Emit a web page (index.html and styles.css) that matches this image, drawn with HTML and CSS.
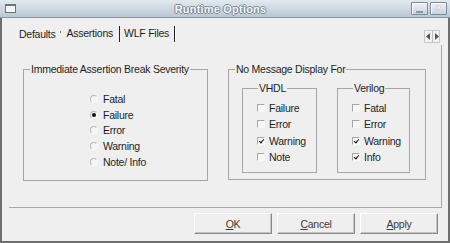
FILE: index.html
```html
<!DOCTYPE html>
<html>
<head>
<meta charset="utf-8">
<link rel="stylesheet" href="styles.css">
</head>
<body>
<div class="window">
  <div class="titlebar">
    <div class="winicon"></div>
    <div class="title">Runtime Options</div>
    <div class="tbtns">
      <div class="tbtn"><span class="minglyph"></span></div>
      <div class="tbtn"><span class="closeglyph">✕</span></div>
    </div>
  </div>
  <div class="body">
    <div class="tabs">
      <span class="tab t-defaults">Defaults</span>
      <span class="tick"></span>
      <span class="tab t-assert">Assertions</span>
      <span class="tab t-wlf">WLF Files</span>
      <div class="arrows">
        <span class="arr"><svg width="5" height="7" viewBox="0 0 5 7"><path d="M4 0 L0 3.5 L4 7 Z" fill="#555"/></svg></span>
        <span class="arr"><svg width="5" height="7" viewBox="0 0 5 7"><path d="M1 0 L5 3.5 L1 7 Z" fill="#555"/></svg></span>
      </div>
    </div>
    <div class="panel">
      <fieldset class="group g-severity">
        <legend>Immediate Assertion Break Severity</legend>
        <ul class="opts radios">
          <li><span class="radio"></span>Fatal</li>
          <li><span class="radio on"></span>Failure</li>
          <li><span class="radio"></span>Error</li>
          <li><span class="radio"></span>Warning</li>
          <li><span class="radio"></span>Note/ Info</li>
        </ul>
      </fieldset>
      <fieldset class="group g-nomsg">
        <legend>No Message Display For</legend>
        <div class="subs">
          <fieldset class="group sub s-vhdl">
            <legend>VHDL</legend>
            <ul class="opts checks">
              <li><span class="check"></span>Failure</li>
              <li><span class="check"></span>Error</li>
              <li><span class="check on"></span>Warning</li>
              <li><span class="check"></span>Note</li>
            </ul>
          </fieldset>
          <fieldset class="group sub s-verilog">
            <legend>Verilog</legend>
            <ul class="opts checks">
              <li><span class="check"></span>Fatal</li>
              <li><span class="check"></span>Error</li>
              <li><span class="check on"></span>Warning</li>
              <li><span class="check on"></span>Info</li>
            </ul>
          </fieldset>
        </div>
      </fieldset>
    </div>
    <div class="buttons">
      <div class="btn" role="button"><u>O</u>K</div>
      <div class="btn" role="button"><u>C</u>ancel</div>
      <div class="btn" role="button"><u>A</u>pply</div>
    </div>
  </div>
</div>
</body>
</html>
```
FILE: styles.css
```css
* { box-sizing: border-box; }
html, body { margin: 0; padding: 0; }
body {
  width: 450px;
  height: 243px;
  overflow: hidden;
  font-family: "Liberation Sans", Arial, sans-serif;
  font-size: 10.5px;
  letter-spacing: -0.25px;
  color: #1e1e1e;
  background: #efefef;
}
.window {
  width: 450px;
  height: 243px;
  display: flex;
  flex-direction: column;
  background: #efefef;
  border-left: 2px solid #6e6e6e;
  border-right: 2px solid #6e6e6e;
  border-bottom: 2px solid #6e6e6e;
}
.titlebar {
  height: 18px;
  flex: none;
  margin: 0 -2px;
  display: flex;
  align-items: center;
  background: linear-gradient(#e3e9ef, #b9c7d4);
  border-bottom: 1px solid #8896a4;
}
.winicon {
  width: 11px;
  height: 9px;
  margin-left: 5px;
  border: 1px solid #6a7480;
  border-top-width: 2px;
  background: #f4f6f8;
}
.title {
  flex: 1;
  text-align: center;
  font-weight: bold;
  font-size: 11px;
  color: #f5f7fa;
  letter-spacing: 0.2px;
  text-shadow: 1px 0 0 #7a8896, -1px 0 0 #7a8896, 0 1px 0 #7a8896, 0 -1px 0 #7a8896;
  padding-left: 14px;
}
.tbtns { display: flex; gap: 2px; margin-right: 3px; }
.tbtn {
  width: 17px;
  height: 13px;
  border: 1px solid #7d8a97;
  border-radius: 1px;
  background: linear-gradient(#eef2f6, #c9d3dd);
  display: flex;
  align-items: center;
  justify-content: center;
  box-shadow: inset 1px 1px 0 #fff;
}
.minglyph { width: 7px; height: 2px; background: #fff; border: 1px solid #8a96a2; margin-top: 6px; }
.closeglyph { font-size: 9px; color: #fff; text-shadow: 0 0 1px #6a7682; line-height: 9px; letter-spacing: 0; }

.body { flex: 1; display: flex; flex-direction: column; }
.tabs {
  height: 27px;
  flex: none;
  display: flex;
  align-items: center;
  padding-left: 17px;
  padding-top: 5px;
}
.tab { line-height: 15px; white-space: nowrap; }
.t-defaults { margin-right: 4px; }
.tick { width: 1px; height: 2px; background: #777; align-self: flex-start; margin-top: 8px; margin-right: 6px; }
.t-assert { padding-right: 6px; border-right: 1px solid #222; padding-bottom: 1px; }
.t-wlf { padding: 0 5px 1px 4px; border-right: 1px solid #222; box-shadow: 1px 0 0 #fff; }
.arrows {
  margin-left: auto;
  margin-right: 8px;
  align-self: flex-end;
  margin-bottom: 2px;
  display: flex;
  border: 1px solid #c8c8c8;
}
.arr {
  width: 7px;
  height: 11px;
  display: flex;
  align-items: center;
  justify-content: center;
  background: #f2f2f2;
}
.arr + .arr { border-left: 1px solid #bbb; }

.panel {
  margin-left: 7px;
  width: 433px;
  height: 163px;
  flex: none;
  border-right: 1px solid #a8a8a8;
  border-bottom: 1px solid #a8a8a8;
  display: flex;
  align-items: flex-start;
  padding: 18px 0 0 14px;
  gap: 20px;
}
.group {
  margin: 0;
  border: 1px solid #a6a6a6;
  padding: 0;
  min-width: 0;
}
.group legend {
  padding: 0 1px;
  margin-left: 6px;
  line-height: 13px;
}
.g-severity { width: 185px; height: 118px; }
.g-nomsg { width: 198px; height: 117px; }
.opts { list-style: none; margin: 0; padding: 0; }
.opts li { display: flex; align-items: center; white-space: nowrap; }
.radios { margin: 15px 0 0 66px; }
.radios li { height: 15.75px; }
.radio {
  width: 8px;
  height: 8px;
  border-radius: 50%;
  border: 1px solid;
  border-color: #b8b8b8 #f8f8f8 #f8f8f8 #b8b8b8;
  background: #f4f4f4;
  margin-right: 5px;
  position: relative;
}
.radio.on::after {
  content: "";
  position: absolute;
  left: 1px;
  top: 1px;
  width: 4px;
  height: 4px;
  border-radius: 50%;
  background: #111;
}
.subs { display: flex; gap: 20px; padding: 6px 0 0 13px; }
.sub { height: 91px; }
.sub legend { margin-left: 15px; }
.s-vhdl { width: 75px; }
.s-verilog { width: 73px; }
.checks { margin: 5px 0 0 14px; }
.checks li { height: 16.3px; }
.check {
  width: 8px;
  height: 8px;
  border: 1px solid;
  border-color: #a8a8a8 #f8f8f8 #f8f8f8 #a8a8a8;
  background: #f6f6f6;
  margin-right: 4px;
  position: relative;
}
.check.on::after {
  content: "";
  position: absolute;
  top: 0px;
  left: 2px;
  width: 2px;
  height: 4px;
  border: solid #111;
  border-width: 0 1.5px 1.5px 0;
  transform: rotate(40deg);
}

.buttons {
  display: flex;
  justify-content: flex-end;
  gap: 5px;
  padding: 5px 10px 0 0;
}
.btn {
  width: 78px;
  height: 21px;
  display: flex;
  align-items: center;
  justify-content: center;
  color: #3a3a3a;
  background: #efefef;
  border: 1px solid;
  border-color: #ffffff #8a8a8a #8a8a8a #ffffff;
  box-shadow: inset -1px -1px 0 #c4c4c4;
}
.btn u { text-underline-offset: 1px; }
```
